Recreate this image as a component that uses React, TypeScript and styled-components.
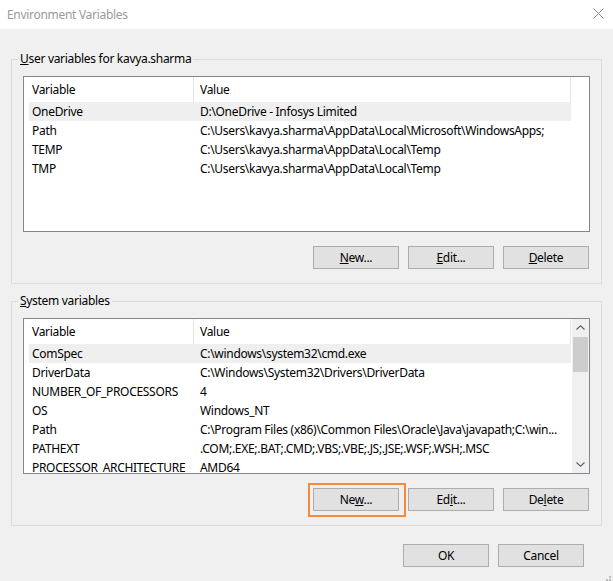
import React from "react";
import styled, { createGlobalStyle } from "styled-components";

const Global = createGlobalStyle`
  html, body { margin: 0; padding: 0; background: #f0f0f0; }
  body {
    font-family: "Noto Sans", "Segoe UI", "Liberation Sans", sans-serif;
    font-size: 12px;
    letter-spacing: -0.3px;
    color: #000;
  }
  * { box-sizing: border-box; }
`;

const Window = styled.div`
  position: relative;
  width: 613px;
  height: 581px;
  background: #f0f0f0;
  display: flex;
  flex-direction: column;
  overflow: hidden;
`;

const TitleBar = styled.div`
  height: 29px;
  flex-shrink: 0;
  background: #fff;
  display: flex;
  align-items: center;
  justify-content: space-between;
  padding: 0 9px 0 7px;
`;

const Title = styled.span`
  color: #9a9a9a;
  font-size: 12px;
  line-height: 16px;
`;

const CloseBtn = styled.div`
  width: 12px;
  height: 12px;
  display: flex;
  align-items: center;
  justify-content: center;
  margin-top: -2px;
`;

const Body = styled.div`
  flex: 1;
  display: flex;
  flex-direction: column;
  padding: 30px 11px 0 11px;
`;

const GroupBox = styled.div<{ $gapTop?: number }>`
  position: relative;
  width: 591px;
  border: 1px solid #dcdcdc;
  padding: 16px 11px 14px 11px;
  margin-top: ${(p) => p.$gapTop ?? 0}px;
`;

const GroupLabel = styled.span`
  position: absolute;
  top: -9px;
  left: 6px;
  padding: 0 2px;
  background: #f0f0f0;
  line-height: 16px;
`;

const ListBox = styled.div`
  height: 156px;
  border: 1px solid #828790;
  background: #fff;
  display: flex;
  overflow: hidden;
`;

const ListContent = styled.div`
  flex: 1;
  padding-left: 5px;
  overflow: hidden;
  display: flex;
  flex-direction: column;
`;

const HeaderRow = styled.div`
  display: flex;
  height: 25px;
  flex-shrink: 0;
`;

const HeaderCell = styled.div<{ $w: number; $pad: number }>`
  width: ${(p) => p.$w}px;
  padding-left: ${(p) => p.$pad}px;
  border-right: 1px solid #e5e5e5;
  display: flex;
  align-items: center;
  white-space: nowrap;
  overflow: hidden;
  flex-shrink: 0;
`;

const Row = styled.div<{ $sel?: boolean }>`
  display: flex;
  height: 19px;
  flex-shrink: 0;
  width: 542px;
  background: ${(p) => (p.$sel ? "#efefef" : "transparent")};
`;

const Cell = styled.div<{ $w: number; $pad: number }>`
  width: ${(p) => p.$w}px;
  padding-left: ${(p) => p.$pad}px;
  line-height: 19px;
  white-space: nowrap;
  overflow: hidden;
  text-overflow: ellipsis;
  flex-shrink: 0;
`;

const ScrollBar = styled.div`
  width: 17px;
  flex-shrink: 0;
  background: #f0f0f0;
  display: flex;
  flex-direction: column;
`;

const ScrollArrow = styled.div`
  height: 17px;
  display: flex;
  align-items: center;
  justify-content: center;
`;

const ScrollTrack = styled.div`
  flex: 1;
  display: flex;
  flex-direction: column;
  padding: 1px 1px 0 1px;
`;

const Thumb = styled.div`
  height: 35px;
  background: #cdcdcd;
`;

const ButtonRow = styled.div<{ $top: number; $right: number }>`
  display: flex;
  justify-content: flex-end;
  gap: 9px;
  margin-top: ${(p) => p.$top}px;
  padding-right: ${(p) => p.$right}px;
`;

const Button = styled.button<{ $focus?: boolean }>`
  position: relative;
  width: 86px;
  height: 23px;
  padding: 0;
  background: #e1e1e1;
  border: 1px solid #adadad;
  font-family: inherit;
  font-size: 12px;
  letter-spacing: inherit;
  color: #000;
  line-height: 21px;
  outline: none;

  &::after {
    content: "";
    display: ${(p) => (p.$focus ? "block" : "none")};
    position: absolute;
    top: -6px;
    left: -6px;
    right: -8px;
    bottom: -7px;
    border: 2px solid #f5893c;
    pointer-events: none;
  }
`;

const Grip = styled.div`
  position: absolute;
  right: 2px;
  bottom: 1px;
  width: 9px;
  height: 9px;
`;

const COL1 = 165;
const COL2 = 377;

type Variable = [string, string];

const userVars: Variable[] = [
  ["OneDrive", "D:\\OneDrive - Infosys Limited"],
  ["Path", "C:\\Users\\kavya.sharma\\AppData\\Local\\Microsoft\\WindowsApps;"],
  ["TEMP", "C:\\Users\\kavya.sharma\\AppData\\Local\\Temp"],
  ["TMP", "C:\\Users\\kavya.sharma\\AppData\\Local\\Temp"],
];

const sysVars: Variable[] = [
  ["ComSpec", "C:\\windows\\system32\\cmd.exe"],
  ["DriverData", "C:\\Windows\\System32\\Drivers\\DriverData"],
  ["NUMBER_OF_PROCESSORS", "4"],
  ["OS", "Windows_NT"],
  ["Path", "C:\\Program Files (x86)\\Common Files\\Oracle\\Java\\javapath;C:\\win..."],
  ["PATHEXT", ".COM;.EXE;.BAT;.CMD;.VBS;.VBE;.JS;.JSE;.WSF;.WSH;.MSC"],
  ["PROCESSOR_ARCHITECTURE", "AMD64"],
];

const Chevron = ({ up }: { up?: boolean }) => (
  <svg width="9" height="5" viewBox="0 0 9 5">
    <path
      d={up ? "M0.5 4.5 L4.5 0.8 L8.5 4.5" : "M0.5 0.5 L4.5 4.2 L8.5 0.5"}
      fill="none"
      stroke="#606060"
      strokeWidth="1.1"
    />
  </svg>
);

const VarList = ({ rows, scroll }: { rows: Variable[]; scroll?: boolean }) => (
  <ListBox>
    <ListContent>
      <HeaderRow>
        <HeaderCell $w={COL1} $pad={3}>Variable</HeaderCell>
        <HeaderCell $w={COL2} $pad={6}>Value</HeaderCell>
      </HeaderRow>
      {rows.map(([k, v], i) => (
        <Row key={k + i} $sel={i === 0}>
          <Cell $w={COL1} $pad={3}>{k}</Cell>
          <Cell $w={COL2} $pad={6}>{v}</Cell>
        </Row>
      ))}
    </ListContent>
    {scroll && (
      <ScrollBar>
        <ScrollArrow>
          <Chevron up />
        </ScrollArrow>
        <ScrollTrack>
          <Thumb />
        </ScrollTrack>
        <ScrollArrow>
          <Chevron />
        </ScrollArrow>
      </ScrollBar>
    )}
  </ListBox>
);

export default function App() {
  return (
    <>
      <Global />
      <Window>
        <TitleBar>
          <Title>Environment Variables</Title>
          <CloseBtn>
            <svg width="11" height="11" viewBox="0 0 11 11">
              <path d="M0.5 0.5 L10.5 10.5 M10.5 0.5 L0.5 10.5" stroke="#8a8a8a" strokeWidth="1" />
            </svg>
          </CloseBtn>
        </TitleBar>
        <Body>
          <GroupBox>
            <GroupLabel>
              <u>U</u>ser variables for kavya.sharma
            </GroupLabel>
            <VarList rows={userVars} />
            <ButtonRow $top={14} $right={1}>
              <Button>
                <u>N</u>ew...
              </Button>
              <Button>
                <u>E</u>dit...
              </Button>
              <Button>
                <u>D</u>elete
              </Button>
            </ButtonRow>
          </GroupBox>
          <GroupBox $gapTop={17}>
            <GroupLabel>
              <u>S</u>ystem variables
            </GroupLabel>
            <VarList rows={sysVars} scroll />
            <ButtonRow $top={14} $right={1}>
              <Button $focus>
                Ne<u>w</u>...
              </Button>
              <Button>
                Ed<u>i</u>t...
              </Button>
              <Button>
                De<u>l</u>ete
              </Button>
            </ButtonRow>
          </GroupBox>
          <ButtonRow $top={18} $right={18}>
            <Button>OK</Button>
            <Button>Cancel</Button>
          </ButtonRow>
        </Body>
        <Grip>
          <svg width="9" height="9" viewBox="0 0 9 9">
            {[
              [7, 1],
              [4, 4],
              [7, 4],
              [1, 7],
              [4, 7],
              [7, 7],
            ].map(([x, y]) => (
              <rect key={`${x}-${y}`} x={x} y={y} width="2" height="2" fill="#bdbdbd" />
            ))}
          </svg>
        </Grip>
      </Window>
    </>
  );
}
